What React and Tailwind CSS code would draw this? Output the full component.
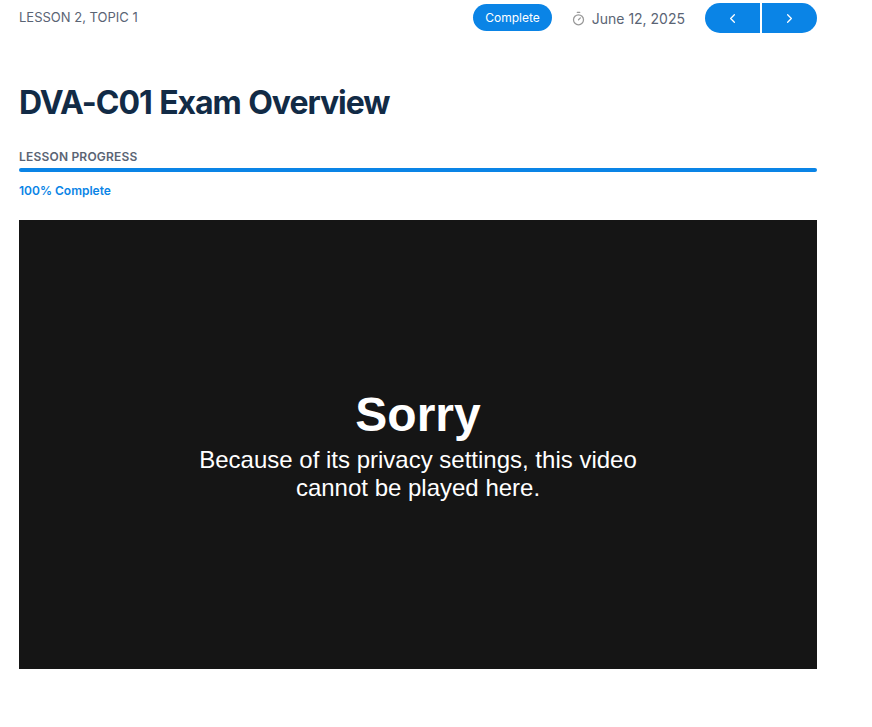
import React from "react";
import { ChevronLeft, ChevronRight, Timer } from "lucide-react";

export default function App() {
  return (
    <div className="w-[872px] h-[727px] bg-white overflow-hidden font-['Inter',sans-serif]">
      <div className="w-[798px] ml-[19px] pt-[3px]">
        <div className="flex items-center justify-between h-[30px]">
          <span className="text-[13px] text-[#5a6474]">LESSON 2, TOPIC 1</span>
          <div className="flex items-center">
            <span className="h-[27px] -mt-[1px] flex items-center px-3 rounded-full bg-[#0a84e6] text-white text-[12px]">
              Complete
            </span>
            <Timer size={15} strokeWidth={2} className="ml-[19px] text-[#999999]" />
            <span className="ml-[6px] text-[14px] text-[#5a6474]">June 12, 2025</span>
            <div className="ml-5 flex gap-[2px]">
              <div className="w-[55px] h-[30px] flex items-center justify-center rounded-l-full bg-[#0a84e6] text-white">
                <ChevronLeft size={15} strokeWidth={2} />
              </div>
              <div className="w-[55px] h-[30px] flex items-center justify-center rounded-r-full bg-[#0a84e6] text-white">
                <ChevronRight size={15} strokeWidth={2} />
              </div>
            </div>
          </div>
        </div>

        <h1 className="mt-[50px] text-[32px] leading-[40px] font-bold tracking-[-1.05px] [word-spacing:1px] text-[#122b46]">
          DVA-C01 Exam Overview
        </h1>

        <div className="mt-[26px] text-[12px] leading-[16px] font-semibold tracking-[0.2px] text-[#5a6474]">LESSON PROGRESS</div>
        <div className="mt-[3px] h-1 rounded-full bg-[#0a84e6]"></div>
        <div className="mt-[11px] text-[12px] leading-[16px] font-semibold text-[#0a84e6]">100% Complete</div>

        <div className="mt-[21px] h-[449px] pb-[1px] bg-[#151515] flex flex-col items-center justify-center text-white font-['Liberation_Sans',sans-serif]">
          <div className="mb-[3px] text-[48px] leading-[56px] font-bold">Sorry</div>
          <div className="w-[460px] text-center text-[24px] leading-[28px]">
            Because of its privacy settings, this video cannot be played here.
          </div>
        </div>
      </div>
    </div>
  );
}
